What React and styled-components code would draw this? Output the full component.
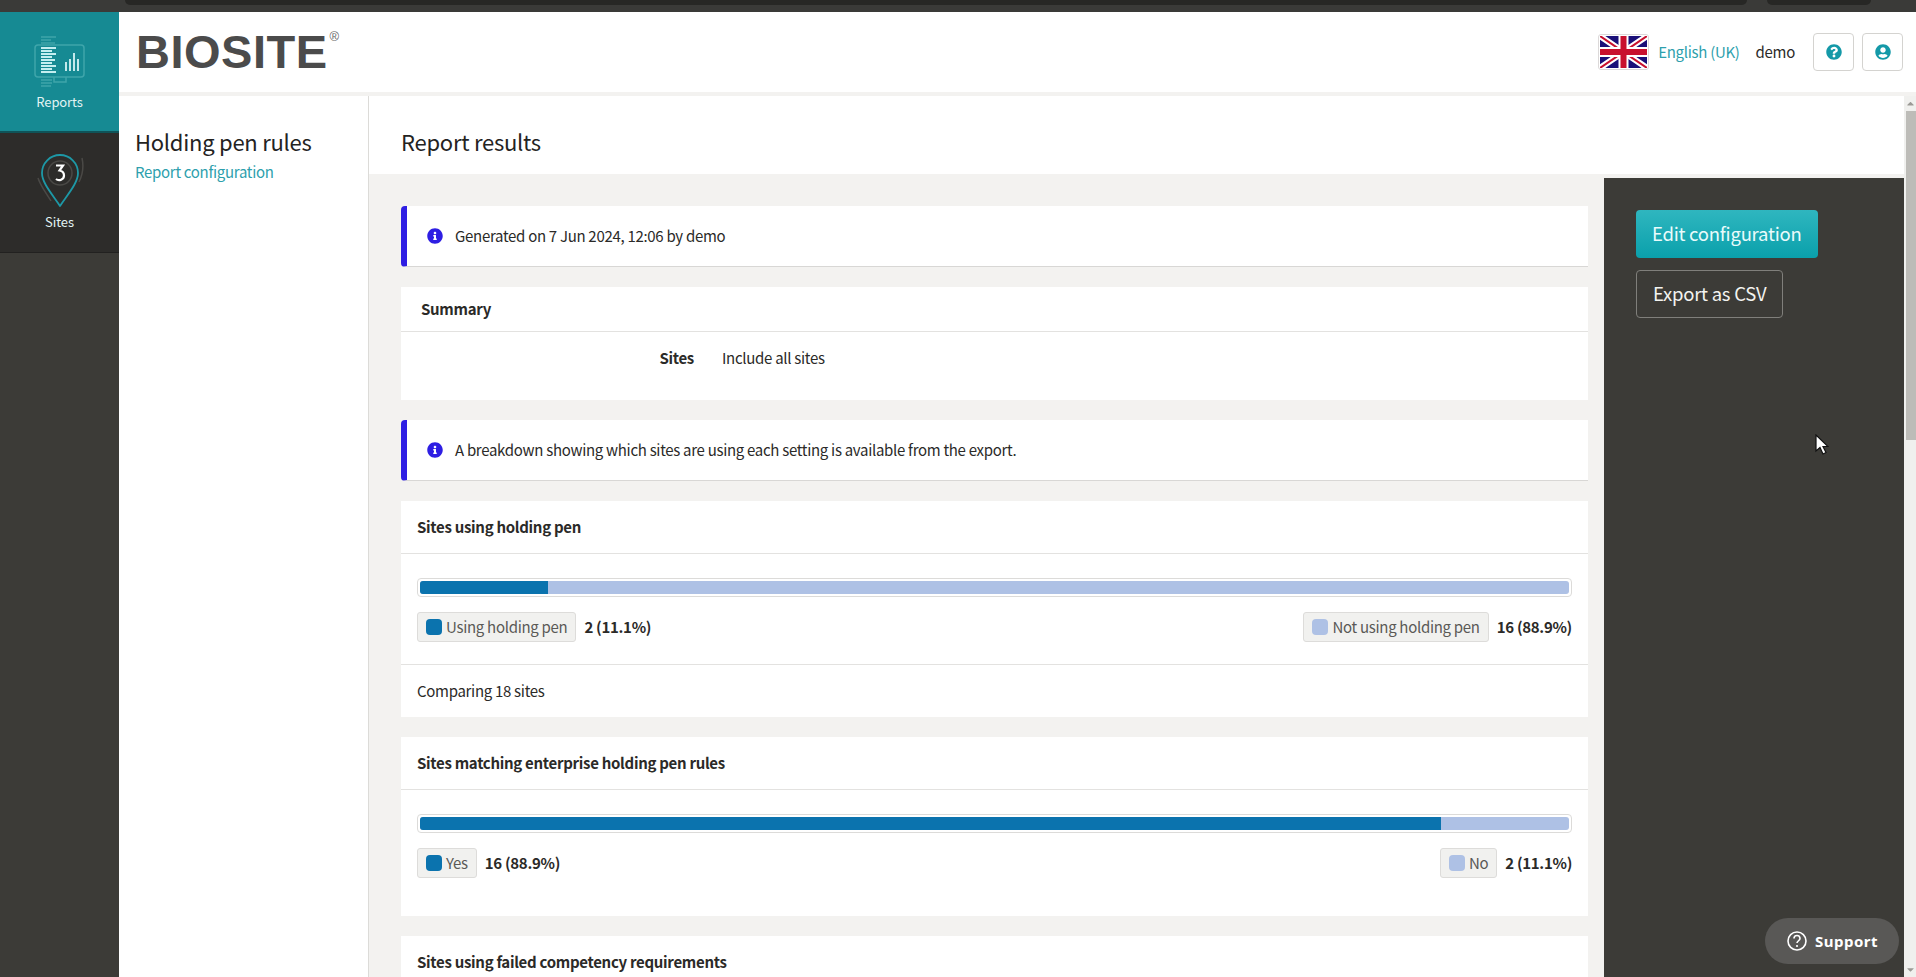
import React from "react";
import styled, { createGlobalStyle } from "styled-components";
import { FaInfoCircle, FaQuestionCircle, FaUserCircle, FaCaretUp, FaCaretDown } from "react-icons/fa";

const charts = [
  {
    title: "Sites using holding pen",
    percent: 11.1,
    left: { label: "Using holding pen", value: "2 (11.1%)" },
    right: { label: "Not using holding pen", value: "16 (88.9%)" },
    footer: "Comparing 18 sites",
  },
  {
    title: "Sites matching enterprise holding pen rules",
    percent: 88.9,
    left: { label: "Yes", value: "16 (88.9%)" },
    right: { label: "No", value: "2 (11.1%)" },
  },
  {
    title: "Sites using failed competency requirements",
  },
];

const ReportsIcon = () => (
  <svg width="52" height="54" viewBox="0 0 52 54" fill="none">
    <rect x="1" y="12" width="49" height="32" rx="3" stroke="#3fa5ab" strokeWidth="1.5" />
    <path d="M20 44v5h12v-5" stroke="#3fa5ab" strokeWidth="1.5" />
    <path d="M7 4h15M7 7h10M7 10h14M7 47h11M7 50h11M7 53h10" stroke="#3fa5ab" strokeWidth="1.6" />
    <path d="M7 15h15M7 18h11M7 21h15M7 24h11M7 27h14M7 30h11M7 33h15M7 36h11M7 39h15" stroke="#c4eef0" strokeWidth="2" />
    <path d="M32 29v9M36 26v12M40 20v18M44 26v12" stroke="#d5f3f4" strokeWidth="1.8" />
  </svg>
);

const SitesIcon = () => (
  <svg width="48" height="58" viewBox="0 0 48 58" fill="none">
    <path d="M24 53C16 41 6 30 6 20a18 18 0 0 1 36 0c0 10-10 21-18 33z" stroke="#1d98a6" strokeWidth="1.8" strokeLinejoin="round" />
    <circle cx="24" cy="20" r="12" stroke="#4a4946" strokeWidth="1.500" />
    <path d="M2 25c3 9 9 16 13 23M46 5c2 9 1 16-3 24" stroke="#4a4946" strokeWidth="1.500" />
    <path d="M20 12.500h7l-3.500 5c3 .5 4.500 2.500 4.500 5 0 4-5 6-8 3.500" stroke="#fff" strokeWidth="2.200" />
  </svg>
);

const UkFlag = () => (
  <svg width="47" height="32" viewBox="0 0 47 32">
    <rect width="47" height="32" fill="#1a0f78" />
    <path d="M0 0l47 32M47 0L0 32" stroke="#fff" strokeWidth="6" />
    <path d="M0 0l47 32M47 0L0 32" stroke="#c8102e" strokeWidth="2" />
    <path d="M23.500 0v32M0 16h47" stroke="#fff" strokeWidth="10" />
    <path d="M23.500 0v32M0 16h47" stroke="#c8102e" strokeWidth="6" />
  </svg>
);

const SupportIcon = () => (
  <svg width="20" height="24" viewBox="0 0 20 24" fill="none">
    <ellipse cx="10" cy="12" rx="9" ry="9" stroke="#fff" strokeWidth="1.600" />
    <path d="M7 9.500c0-2 1.500-3 3-3s3 1 3 3c0 2-3 2.500-3 4.500" stroke="#fff" strokeWidth="1.600" />
    <circle cx="10" cy="17" r="1.100" fill="#fff" />
  </svg>
);

const App = () => {
  return (
    <Page>
      <GlobalStyle />
      <TopStrip>
        <BrowserTab $width={1622} />
        <BrowserTab $width={104} />
      </TopStrip>
      <Body>
        <Nav>
          <NavItem $active>
            <ReportsIcon />
            <NavLabel $gap={5}>Reports</NavLabel>
          </NavItem>
          <NavItem>
            <SitesIcon />
            <NavLabel $gap={1}>Sites</NavLabel>
          </NavItem>
        </Nav>
        <Right>
          <Header>
            <LogoWrap>
              <Logo>BIOSITE</Logo>
              <LogoMark>®</LogoMark>
            </LogoWrap>
            <HeaderTools>
              <FlagBox>
                <UkFlag />
              </FlagBox>
              <Language>English (UK)</Language>
              <UserName>demo</UserName>
              <IconButton>
                <FaQuestionCircle />
              </IconButton>
              <IconButton>
                <FaUserCircle />
              </IconButton>
            </HeaderTools>
          </Header>
          <Workspace>
            <SubNav>
              <SubNavTitle>Holding pen rules</SubNavTitle>
              <SubNavLink>Report configuration</SubNavLink>
            </SubNav>
            <Main>
              <TitleBar>Report results</TitleBar>
              <Content>
                <Cards>
                  <Notice>
                    <NoticeIcon />
                    Generated on 7 Jun 2024, 12:06 by demo
                  </Notice>
                  <SummaryCard>
                    <SummaryHead>Summary</SummaryHead>
                    <SummaryRow>
                      <SummaryLabel>Sites</SummaryLabel>
                      <span>Include all sites</span>
                    </SummaryRow>
                  </SummaryCard>
                  <Notice>
                    <NoticeIcon />
                    A breakdown showing which sites are using each setting is available from the export.
                  </Notice>
                  {charts.map((chart) => (
                    <Card key={chart.title}>
                      <CardHead>{chart.title}</CardHead>
                      {chart.left && (
                        <CardBody $tall={!chart.footer}>
                          <Bar>
                            <BarTrack>
                              <BarFill style={{ width: `${chart.percent}%` }} />
                            </BarTrack>
                          </Bar>
                          <Legend>
                            <LegendGroup>
                              <Chip>
                                <Swatch $dark />
                                {chart.left.label}
                              </Chip>
                              <Value>{chart.left.value}</Value>
                            </LegendGroup>
                            <LegendGroup>
                              <Chip>
                                <Swatch />
                                {chart.right.label}
                              </Chip>
                              <Value>{chart.right.value}</Value>
                            </LegendGroup>
                          </Legend>
                        </CardBody>
                      )}
                      {chart.footer && <CardFooter>{chart.footer}</CardFooter>}
                    </Card>
                  ))}
                </Cards>
                <Actions>
                  <PrimaryButton>Edit configuration</PrimaryButton>
                  <OutlineButton>Export as CSV</OutlineButton>
                </Actions>
              </Content>
            </Main>
            <Scrollbar>
              <ScrollArrow>
                <FaCaretUp />
              </ScrollArrow>
              <ScrollThumb />
              <ScrollArrow>
                <FaCaretDown />
              </ScrollArrow>
            </Scrollbar>
          </Workspace>
        </Right>
      </Body>
      <SupportButton>
        <SupportIcon />
        Support
      </SupportButton>
      <Cursor width="14" height="22" viewBox="0 0 14 22">
        <path d="M1 1v16l4-3.500 3 6.500 3-1.500-3-6h5z" fill="#fff" stroke="#111" strokeWidth="1.200" />
      </Cursor>
    </Page>
  );
};

export default App;

const GlobalStyle = createGlobalStyle`
  html, body {
    margin: 0;
    padding: 0;
    height: 100%;
    overflow: hidden;
  }
  body {
    font-family: "Noto Sans CJK JP", "Noto Sans", sans-serif;
    font-size: 15px;
    letter-spacing: -0.3px;
    line-height: 22px;
    color: #2b2a28;
    background: #3c3b37;
  }
  * {
    box-sizing: border-box;
  }
`;

const Page = styled.div`
  position: relative;
  display: flex;
  flex-direction: column;
  height: 977px;
  overflow: hidden;
`;

const TopStrip = styled.div`
  display: flex;
  flex: none;
  gap: 20px;
  height: 12px;
  padding-left: 125px;
  background: #3a3a38;
`;

const BrowserTab = styled.div`
  width: ${({ $width }) => $width}px;
  height: 5px;
  background: #272725;
  border-radius: 0 0 10px 10px;
`;

const Body = styled.div`
  display: flex;
  flex: 1;
  min-height: 0;
`;

const Nav = styled.nav`
  flex: none;
  width: 119px;
  background: #3c3b37;
`;

const NavItem = styled.div`
  display: flex;
  flex-direction: column;
  align-items: center;
  height: ${({ $active }) => ($active ? 121 : 120)}px;
  padding-top: ${({ $active }) => ($active ? 21 : 20)}px;
  background: ${({ $active }) => ($active ? "#168a93" : "#2d2c2a")};
  border-bottom: ${({ $active }) => ($active ? "2px solid #0f5358" : "1px solid #222120")};
`;

const NavLabel = styled.span`
  margin-top: ${({ $gap }) => $gap}px;
  font-size: 13px;
  line-height: 20px;
  letter-spacing: -0.1px;
  color: #e2f4f4;
`;

const Right = styled.div`
  display: flex;
  flex: 1;
  flex-direction: column;
  min-width: 0;
  background: #f3f2f0;
`;

const Header = styled.header`
  display: flex;
  flex: none;
  align-items: center;
  justify-content: space-between;
  height: 80px;
  padding: 0 13px 0 17px;
  background: #fff;
`;

const LogoWrap = styled.div`
  display: flex;
  align-items: flex-start;
`;

const Logo = styled.span`
  font-family: "Liberation Sans", Arial, sans-serif;
  font-size: 47px;
  line-height: 48px;
  font-weight: 700;
  letter-spacing: 0.5px;
  color: #4b4b4b;
`;

const LogoMark = styled.span`
  margin: 2px 0 0 2px;
  font-family: "Liberation Sans", Arial, sans-serif;
  font-size: 13px;
  line-height: 14px;
  color: #666;
`;

const HeaderTools = styled.div`
  display: flex;
  align-items: center;
`;

const FlagBox = styled.div`
  display: flex;
  align-items: center;
  justify-content: center;
  width: 51px;
  height: 36px;
  margin-right: 9px;
  background: #fff;
  border: 1px solid #dcd9d9;
  border-radius: 3px;
`;

const Language = styled.a`
  margin-right: 16px;
  color: #2e9fad;
`;

const UserName = styled.span`
  margin-right: 18px;
`;

const IconButton = styled.button`
  display: flex;
  align-items: center;
  justify-content: center;
  width: 41px;
  height: 38px;
  margin-left: 8px;
  padding: 0;
  font-size: 16px;
  color: #1499a8;
  background: #fff;
  border: 1px solid #d4d3d0;
  border-radius: 4px;

  &:first-of-type {
    margin-left: 0;
  }
`;

const Workspace = styled.div`
  display: flex;
  flex: 1;
  min-height: 0;
  margin-top: 4px;
`;

const SubNav = styled.aside`
  display: flex;
  flex: none;
  flex-direction: column;
  width: 250px;
  padding: 30px 16px;
  background: #fff;
  border-right: 1px solid #dcdbd8;
  background-clip: padding-box;
`;

const SubNavTitle = styled.h2`
  margin: 0;
  font-size: 22px;
  line-height: 30px;
  font-weight: 400;
  letter-spacing: -0.25px;
  color: #24231f;
`;

const SubNavLink = styled.a`
  margin-top: 5px;
  color: #2e9fad;
`;

const Main = styled.main`
  display: flex;
  flex: 1;
  flex-direction: column;
  min-width: 0;
  background: #f3f2f0;
`;

const TitleBar = styled.h1`
  flex: none;
  height: 78px;
  margin: 0;
  padding: 30px 32px 0;
  font-size: 22px;
  line-height: 30px;
  font-weight: 400;
  letter-spacing: -0.25px;
  color: #24231f;
  background: #fff;
`;

const Content = styled.div`
  display: flex;
  flex: 1;
  min-height: 0;
`;

const Cards = styled.div`
  display: flex;
  flex: 1;
  flex-direction: column;
  gap: 20px;
  min-width: 0;
  padding: 32px 16px 0 32px;
`;

const Notice = styled.div`
  display: flex;
  flex: none;
  align-items: center;
  gap: 12px;
  height: 61px;
  padding-left: 20px;
  background: #fff;
  border-left: 6px solid #2e1ee3;
  border-bottom: 1px solid #d8d7d5;
  border-radius: 4px 0 0 4px;
`;

const NoticeIcon = styled(FaInfoCircle)`
  flex: none;
  width: 16px;
  height: 16px;
  color: #2e1ee3;
`;

const Card = styled.section`
  flex: none;
  background: #fff;
`;

const SummaryCard = styled(Card)`
  height: 113px;
`;

const SummaryHead = styled.div`
  height: 45px;
  padding: 11px 20px;
  font-weight: 700;
  border-bottom: 1px solid #e3e2e0;
`;

const SummaryRow = styled.div`
  display: grid;
  grid-template-columns: 293px 1fr;
  gap: 28px;
  padding-top: 15px;
`;

const SummaryLabel = styled.span`
  font-weight: 700;
  text-align: right;
`;

const CardHead = styled.div`
  height: 53px;
  padding: 15px 16px;
  font-weight: 700;
  border-bottom: 1px solid #e3e2e0;
`;

const CardBody = styled.div`
  height: ${({ $tall }) => ($tall ? 126 : 110)}px;
  padding: 24px 16px;
`;

const Bar = styled.div`
  height: 19px;
  padding: 2px;
  background: #fff;
  border: 1px solid #dcdbd9;
  border-radius: 4px;
`;

const BarTrack = styled.div`
  height: 13px;
  overflow: hidden;
  background: #aec1e5;
  border-radius: 3px;
`;

const BarFill = styled.div`
  height: 100%;
  background: #0b73ae;
`;

const Legend = styled.div`
  display: flex;
  justify-content: space-between;
  margin-top: 15px;
`;

const LegendGroup = styled.div`
  display: flex;
  align-items: center;
  gap: 8px;
`;

const Chip = styled.span`
  display: flex;
  align-items: center;
  gap: 4px;
  height: 30px;
  padding: 0 8px;
  color: #5a5956;
  background: #f1f1ef;
  border: 1px solid #dddcda;
  border-radius: 3px;
`;

const Swatch = styled.i`
  width: 16px;
  height: 16px;
  background: ${({ $dark }) => ($dark ? "#0b73ae" : "#aec1e5")};
  border-radius: 4px;
`;

const Value = styled.span`
  font-weight: 700;
`;

const CardFooter = styled.div`
  height: 53px;
  padding: 15px 16px;
  border-top: 1px solid #e3e2e0;
`;

const Actions = styled.aside`
  display: flex;
  flex: none;
  flex-direction: column;
  align-items: flex-start;
  gap: 12px;
  width: 300px;
  margin-top: 4px;
  padding: 32px;
  background: #3c3b37;
`;

const ActionButton = styled.button`
  height: 48px;
  padding: 0 16px 2px;
  font-family: inherit;
  font-size: 18.5px;
  line-height: 26px;
  letter-spacing: -0.25px;
  border-radius: 4px;
`;

const PrimaryButton = styled(ActionButton)`
  color: #e9fbfb;
  background: linear-gradient(#2fb6bf, #0aa0ab);
  border: none;
`;

const OutlineButton = styled(ActionButton)`
  color: #f3f3f0;
  background: transparent;
  border: 1px solid #807f7b;
`;

const Scrollbar = styled.div`
  display: flex;
  flex: none;
  flex-direction: column;
  width: 12px;
  background: #f0f0ee;
`;

const ScrollArrow = styled.div`
  display: flex;
  flex: none;
  align-items: center;
  justify-content: center;
  height: 15px;
  font-size: 11px;
  color: #9b9a96;
`;

const ScrollThumb = styled.div`
  width: 10px;
  height: 329px;
  margin-left: 2px;
  margin-bottom: auto;
  background: #bdbcb8;
`;

const SupportButton = styled.div`
  position: absolute;
  top: 918px;
  left: 1765px;
  display: flex;
  align-items: center;
  gap: 8px;
  width: 134px;
  height: 46px;
  padding-left: 22px;
  font-family: "Noto Sans", sans-serif;
  font-size: 15px;
  font-weight: 700;
  letter-spacing: 0.5px;
  color: #fff;
  background: #595856;
  border-radius: 23px;
`;

const Cursor = styled.svg`
  position: absolute;
  top: 434px;
  left: 1815px;
`;
